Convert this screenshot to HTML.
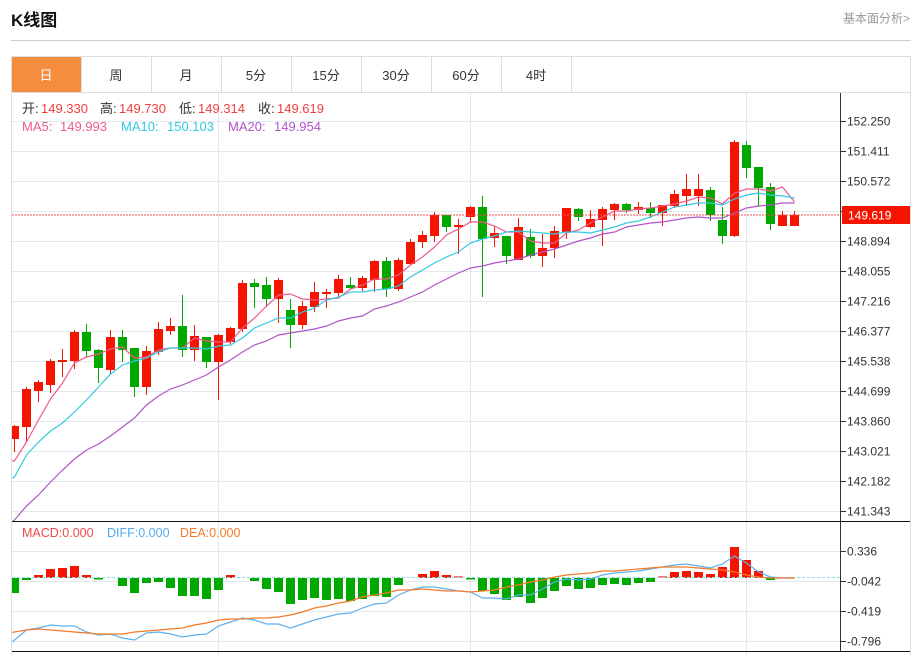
<!DOCTYPE html>
<html lang="zh"><head><meta charset="utf-8"><title>K线图</title>
<style>
html,body{margin:0;padding:0;background:#fff;width:923px;height:655px;overflow:hidden}
svg{display:block;font-family:"Liberation Sans","Noto Sans CJK SC",sans-serif}
</style></head><body>
<svg width="923" height="655" viewBox="0 0 923 655" xmlns="http://www.w3.org/2000/svg">
<defs><clipPath id="c1"><rect x="12" y="93" width="828" height="428"/></clipPath><clipPath id="c2"><rect x="12" y="522" width="828" height="129"/></clipPath></defs>
<text x="11" y="26" font-size="17" font-weight="bold" fill="#111">K线图</text>
<text x="843" y="22.500" font-size="12" fill="#999">基本面分析&gt;</text>
<path d="M11 40.5H911" stroke="#ccc" fill="none"/>
<!-- tabs -->
<path d="M11.5 56.5H910.5V655M11.5 56.5V655M11 92.5H911" stroke="#ddd" fill="none"/>
<rect x="12" y="57" width="69" height="35" rx="1" fill="#f58d3e"/>
<path d="M151.5 57V92M221.5 57V92M291.5 57V92M361.5 57V92M431.5 57V92M501.5 57V92M571.5 57V92" stroke="#ddd" fill="none"/>
<path d="M81.5 57V92" stroke="#ddd" fill="none"/>
<g font-size="13" fill="#333" text-anchor="middle">
<text x="46" y="80" fill="#fff">日</text><text x="116" y="80">周</text><text x="186" y="80">月</text><text x="256" y="80">5分</text><text x="326" y="80">15分</text><text x="396" y="80">30分</text><text x="466" y="80">60分</text><text x="536" y="80">4时</text>
</g>
<!-- grid -->
<path d="M12 121.5H840M12 151.5H840M12 181.5H840M12 211.5H840M12 241.5H840M12 271.5H840M12 301.5H840M12 331.5H840M12 361.5H840M12 391.5H840M12 421.5H840M12 451.5H840M12 481.5H840M12 511.5H840M12 551.5H840M12 581.5H840M12 611.5H840M12 641.5H840" stroke="#e3e9ef" fill="none"/>
<path d="M218.5 93V655M470.5 93V655M746.5 93V655" stroke="#dfe9f2" fill="none"/>
<!-- candles -->
<g clip-path="url(#c1)">
<path fill="none" stroke="#f51400" d="M14.5 425V452M26.5 387V442M38.5 380V402M50.5 359V393M62.5 349V377M74.5 330V369M110.5 330V375M146.5 346V395M158.5 322V355M170.5 318V335M194.5 325V361M218.5 334V400M230.5 327V344M242.5 280V332M278.5 278V323M302.5 301V329M314.5 282V312M326.5 289V308M338.5 275V297M362.5 276V291M374.5 260V292M398.5 258V291M410.5 239V265M422.5 231V248M434.5 212V242M458.5 219V254M470.5 206V223M494.5 226V247M518.5 218V260M542.5 234V267M554.5 226V258M566.5 208V239M590.5 210V228M602.5 207V246M614.5 203V220M638.5 202V214M662.5 205V226M674.5 190V208M686.5 174V206M698.5 174V206M734.5 140V237M782.5 211V226M794.5 211V226"/>
<path fill="none" stroke="#00a800" d="M86.5 324V357M98.5 349V383M122.5 330V362M134.5 348V397M182.5 295V357M206.5 337V368M254.5 279V308M266.5 277V307M290.5 299V348M350.5 277V289M386.5 257V297M446.5 215V232M482.5 196V297M506.5 236V264M530.5 229V258M578.5 208V221M626.5 203V213M650.5 202V218M710.5 187V221M722.5 207V244M746.5 141V178M758.5 167V207M770.5 183V230"/>
<path fill="#f51400" d="M10 426h9v13h-9zM22 389h9v38h-9zM34 382h9v9h-9zM46 361h9v24h-9zM58 360h9v2h-9zM70 332h9v29h-9zM106 337h9v33h-9zM142 351h9v36h-9zM154 329h9v23h-9zM166 326h9v5h-9zM190 336h9v14h-9zM214 335h9v27h-9zM226 328h9v14h-9zM238 283h9v46h-9zM274 280h9v19h-9zM298 306h9v19h-9zM310 292h9v15h-9zM322 292h9v2h-9zM334 279h9v14h-9zM358 278h9v10h-9zM370 261h9v19h-9zM394 260h9v29h-9zM406 242h9v22h-9zM418 235h9v7h-9zM430 215h9v21h-9zM454 225h9v2h-9zM466 207h9v10h-9zM490 233h9v5h-9zM514 227h9v33h-9zM538 248h9v8h-9zM550 231h9v17h-9zM562 208h9v24h-9zM586 219h9v8h-9zM598 209h9v11h-9zM610 204h9v6h-9zM634 207h9v3h-9zM658 205h9v8h-9zM670 194h9v12h-9zM682 189h9v7h-9zM694 189h9v7h-9zM730 142h9v94h-9zM778 215h9v11h-9zM790 215h9v11h-9z"/>
<path fill="#00a800" d="M82 332h9v19h-9zM94 350h9v18h-9zM118 337h9v13h-9zM130 348h9v39h-9zM178 326h9v24h-9zM202 337h9v25h-9zM250 283h9v4h-9zM262 285h9v14h-9zM286 310h9v15h-9zM346 285h9v3h-9zM382 261h9v28h-9zM442 215h9v12h-9zM478 207h9v32h-9zM502 236h9v20h-9zM526 237h9v19h-9zM574 209h9v8h-9zM622 204h9v6h-9zM646 208h9v5h-9zM706 190h9v25h-9zM718 220h9v16h-9zM742 145h9v23h-9zM754 167h9v21h-9zM766 187h9v37h-9z"/>
<polyline fill="none" stroke="#ee5a8d" stroke-width="1.2" points="12,461 14.5,461 26.5,442 38.5,420 50.5,399 62.5,383 74.5,363 86.5,357 98.5,354 110.5,349 122.5,347 134.5,358 146.5,357 158.5,350 170.5,348 182.5,348 194.5,338 206.5,341 218.5,342 230.5,342 242.5,328 254.5,318 266.5,306 278.5,295 290.5,294 302.5,299 314.5,300 326.5,299 338.5,298 350.5,289 362.5,285 374.5,279 386.5,279 398.5,275 410.5,265 422.5,257 434.5,247 446.5,235 458.5,229 470.5,222 482.5,222 494.5,226 506.5,232 518.5,232 530.5,241 542.5,243 554.5,243 566.5,233 578.5,230 590.5,223 602.5,217 614.5,211 626.5,211 638.5,209 650.5,208 662.5,206 674.5,204 686.5,201 698.5,197 710.5,198 722.5,204 734.5,193 746.5,189 758.5,189 770.5,191 782.5,187 794.5,202"/>
<polyline fill="none" stroke="#33c9e0" stroke-width="1.2" points="12,478 14.5,477 26.5,455 38.5,442 50.5,431 62.5,423 74.5,412 86.5,400 98.5,387 110.5,374 122.5,365 134.5,361 146.5,358 158.5,352 170.5,348 182.5,348 194.5,348 206.5,349 218.5,346 230.5,345 242.5,338 254.5,328 266.5,323 278.5,318 290.5,318 302.5,312 314.5,308 326.5,300 338.5,297 350.5,292 362.5,292 374.5,290 386.5,289 398.5,286 410.5,277 422.5,270 434.5,263 446.5,257 458.5,252 470.5,243 482.5,239 494.5,236 506.5,232 518.5,231 530.5,232 542.5,233 554.5,234 566.5,232 578.5,232 590.5,233 602.5,230 614.5,227 626.5,223 638.5,221 650.5,217 662.5,212 674.5,207 686.5,205 698.5,203 710.5,203 722.5,205 734.5,199 746.5,195 758.5,193 770.5,195 782.5,196 794.5,198"/>
<polyline fill="none" stroke="#b055c8" stroke-width="1.2" points="12,522 14.5,520 26.5,506 38.5,495 50.5,482 62.5,470 74.5,459 86.5,450 98.5,444 110.5,436 122.5,427 134.5,418 146.5,405 158.5,396 170.5,389 182.5,385 194.5,380 206.5,375 218.5,367 230.5,360 242.5,352 254.5,345 266.5,341 278.5,335 290.5,333 302.5,331 314.5,329 326.5,326 338.5,321 350.5,318 362.5,316 374.5,309 386.5,306 398.5,302 410.5,297 422.5,292 434.5,285 446.5,279 458.5,273 470.5,268 482.5,266 494.5,263 506.5,261 518.5,259 530.5,255 542.5,252 554.5,249 566.5,245 578.5,241 590.5,238 602.5,234 614.5,232 626.5,227 638.5,225 650.5,223 662.5,222 674.5,220 686.5,218 698.5,217 710.5,218 722.5,218 734.5,213 746.5,208 758.5,206 770.5,205 782.5,203 794.5,203"/>
</g>
<path d="M12 215H840" stroke="#f05050" stroke-width="1" stroke-dasharray="2 1" fill="none"/>
<!-- info text -->
<g font-size="13">
<g fill="#333"><text x="22" y="113">开:</text><text x="100" y="113">高:</text><text x="179" y="113">低:</text><text x="258" y="113">收:</text></g>
<g fill="#f43c3c"><text x="41" y="113">149.330</text><text x="119" y="113">149.730</text><text x="198" y="113">149.314</text><text x="277" y="113">149.619</text></g>
<g fill="#ee5a8d"><text x="22" y="131">MA5:</text><text x="60" y="131">149.993</text></g>
<g fill="#33c9e0"><text x="121" y="131">MA10:</text><text x="167" y="131">150.103</text></g>
<g fill="#b055c8"><text x="228" y="131">MA20:</text><text x="274" y="131">149.954</text></g>
</g>
<!-- lower pane -->
<path d="M12 521.5H910M12 651.5H910" stroke="#111" fill="none"/>
<g clip-path="url(#c2)">
<path fill="#f51400" d="M34 575h9v3h-9zM46 569h9v9h-9zM58 568h9v10h-9zM70 566h9v12h-9zM82 575h9v3h-9zM226 575h9v3h-9zM418 574h9v4h-9zM430 571h9v7h-9zM442 575h9v3h-9zM670 572h9v6h-9zM682 571h9v7h-9zM694 572h9v6h-9zM706 574h9v4h-9zM718 567h9v11h-9zM730 547h9v31h-9zM742 560h9v18h-9zM754 571h9v7h-9z"/>
<path fill="#f87a72" d="M454 576h9v2h-9zM658 576h9v2h-9z"/>
<path fill="#00a800" d="M10 578h9v15h-9zM22 578h9v2h-9zM94 578h9v1.500h-9zM118 578h9v8h-9zM130 578h9v15h-9zM142 578h9v5h-9zM154 578h9v4h-9zM166 578h9v10h-9zM178 578h9v18h-9zM190 578h9v18h-9zM202 578h9v21h-9zM214 578h9v12h-9zM250 578h9v3h-9zM262 578h9v11h-9zM274 578h9v14h-9zM286 578h9v26h-9zM298 578h9v22h-9zM310 578h9v20h-9zM322 578h9v22h-9zM334 578h9v21h-9zM346 578h9v23h-9zM358 578h9v21h-9zM370 578h9v18h-9zM382 578h9v19h-9zM394 578h9v7h-9zM466 578h9v1.500h-9zM478 578h9v13h-9zM490 578h9v16h-9zM502 578h9v22h-9zM514 578h9v19h-9zM526 578h9v25h-9zM538 578h9v20h-9zM550 578h9v13h-9zM562 578h9v8h-9zM574 578h9v11h-9zM586 578h9v10h-9zM598 578h9v7h-9zM610 578h9v6h-9zM622 578h9v7h-9zM634 578h9v5h-9zM646 578h9v4h-9zM766 578h9v2h-9z"/>
<path d="M12 577.5H840" stroke="#8fdcec" stroke-dasharray="3 2" fill="none"/>
<polyline fill="none" stroke="#5fb0ee" stroke-width="1.2" points="12,642 14.5,640 26.5,630 38.5,628 50.5,625 62.5,626 74.5,626 86.5,632 98.5,635 110.5,634 122.5,638 134.5,640 146.5,633 158.5,632 170.5,634 182.5,637 194.5,635 206.5,634 218.5,626 230.5,622 242.5,618 254.5,620 266.5,624 278.5,624 290.5,628 302.5,624 314.5,620 326.5,617 338.5,614 350.5,613 362.5,608 374.5,604 386.5,603 398.5,595 410.5,590 422.5,587 434.5,587 446.5,589 458.5,591 470.5,592 482.5,598 494.5,598 506.5,599 518.5,595 530.5,595 542.5,589 554.5,582 566.5,579 578.5,580 590.5,579 602.5,575 614.5,573 626.5,572 638.5,571 650.5,569 662.5,567 674.5,565 686.5,564 698.5,566 710.5,568 722.5,564 734.5,556 746.5,563 758.5,572 770.5,577 782.5,578 794.5,578"/>
<polyline fill="none" stroke="#f47a2a" stroke-width="1.2" points="12,632.500 14.5,632 26.5,630 38.5,629 50.5,630 62.5,631 74.5,632 86.5,633 98.5,634 110.5,634 122.5,634 134.5,632 146.5,631 158.5,630 170.5,629 182.5,628 194.5,625 206.5,623 218.5,620 230.5,619 242.5,619 254.5,618 266.5,618 278.5,617 290.5,615 302.5,612 314.5,608 326.5,606 338.5,603 350.5,601 362.5,597 374.5,595 386.5,593 398.5,590 410.5,590 422.5,589 434.5,590 446.5,591 458.5,591 470.5,592 482.5,591 494.5,590 506.5,587 518.5,585 530.5,582 542.5,580 554.5,577 566.5,575 578.5,574 590.5,573 602.5,571 614.5,571 626.5,570 638.5,569 650.5,568 662.5,567 674.5,567 686.5,567 698.5,568 710.5,569 722.5,570 734.5,572 746.5,575 758.5,577 770.5,578 782.5,578 794.5,578"/>
</g>
<g font-size="12.500">
<text x="22" y="537" fill="#ef4a4a">MACD:0.000</text>
<text x="107" y="537" fill="#55aaee">DIFF:0.000</text>
<text x="180" y="537" fill="#f47a2a">DEA:0.000</text>
</g>
<!-- axis -->
<path d="M840.5 93V651" stroke="#333" fill="none"/>
<path d="M841 121.500h5M841 151.500h5M841 181.500h5M841 211.500h5M841 241.500h5M841 271.500h5M841 301.500h5M841 331.500h5M841 361.500h5M841 391.500h5M841 421.500h5M841 451.500h5M841 481.500h5M841 511.500h5M841 551.500h5M841 581.500h5M841 611.500h5M841 641.500h5" stroke="#333" fill="none"/>
<g font-size="12" fill="#333">
<text x="847" y="125.500">152.250</text><text x="847" y="155.500">151.411</text><text x="847" y="185.500">150.572</text><text x="847" y="245.500">148.894</text><text x="847" y="275.500">148.055</text><text x="847" y="305.500">147.216</text><text x="847" y="335.500">146.377</text><text x="847" y="365.500">145.538</text><text x="847" y="395.500">144.699</text><text x="847" y="425.500">143.860</text><text x="847" y="455.500">143.021</text><text x="847" y="485.500">142.182</text><text x="847" y="515.500">141.343</text>
<text x="847" y="555.500">0.336</text><text x="847" y="585.500">-0.042</text><text x="847" y="615.500">-0.419</text><text x="847" y="645.500">-0.796</text>
</g>
<rect x="842" y="206" width="68" height="18" fill="#f51400"/>
<text x="848" y="219.500" font-size="12" fill="#fff">149.619</text>
</svg>
</body></html>
